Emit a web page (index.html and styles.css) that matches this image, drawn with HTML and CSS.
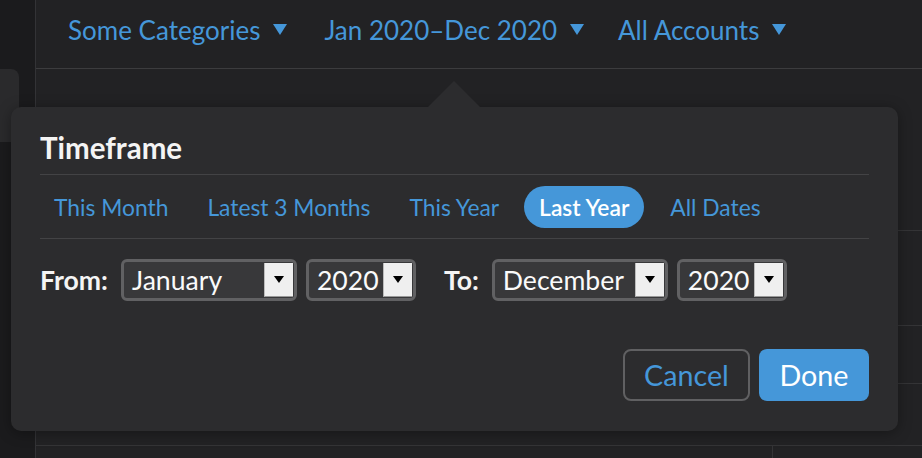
FILE: index.html
```html
<!DOCTYPE html>
<html>
<head>
<meta charset="utf-8">
<link rel="stylesheet" href="styles.css">
</head>
<body>
<div class="app">
  <aside class="sidebar">
    <div class="side-card"></div>
  </aside>
  <main class="main">
    <header class="header">
      <button class="filter">Some Categories <span class="caret"></span></button>
      <button class="filter">Jan 2020–Dec 2020 <span class="caret"></span></button>
      <button class="filter">All Accounts <span class="caret"></span></button>
    </header>
    <div class="grid">
      <div class="cell r1"></div><div class="cell r1"></div>
      <div class="cell r2"></div><div class="cell r2"></div>
      <div class="cell r3"></div><div class="cell r3"></div>
      <div class="cell r4"></div><div class="cell r4"></div>
      <div class="cell r5 c1"></div><div class="cell r5"></div>
    </div>
  </main>
</div>

<div class="popover">
  <div class="arrow"></div>
  <h2 class="title">Timeframe</h2>
  <nav class="presets">
    <a class="preset">This Month</a>
    <a class="preset">Latest 3 Months</a>
    <a class="preset">This Year</a>
    <a class="preset active">Last Year</a>
    <a class="preset">All Dates</a>
  </nav>
  <div class="range">
    <span class="label">From:</span>
    <div class="select month"><span class="val">January</span><span class="btn"><span class="tri"></span></span></div>
    <div class="select year"><span class="val">2020</span><span class="btn"><span class="tri"></span></span></div>
    <span class="label to">To:</span>
    <div class="select month"><span class="val">December</span><span class="btn"><span class="tri"></span></span></div>
    <div class="select year"><span class="val">2020</span><span class="btn"><span class="tri"></span></span></div>
  </div>
  <div class="actions">
    <button class="cancel">Cancel</button>
    <button class="done">Done</button>
  </div>
</div>
</body>
</html>
```

FILE: styles.css
```css
* { box-sizing: border-box; }
html, body {
  margin: 0;
  width: 922px;
  height: 458px;
  overflow: hidden;
  background: #1b1b1d;
  font-family: Lato, "Open Sans", sans-serif;
}
.app {
  display: flex;
  height: 458px;
}
.sidebar {
  width: 36px;
  flex: none;
  background: #1b1b1d;
  border-right: 1px solid #333336;
  padding-top: 69px;
}
.side-card {
  width: 19px;
  height: 73px;
  background: #2a2a2c;
  border-top-right-radius: 8px;
}
.main {
  flex: 1;
  display: flex;
  flex-direction: column;
  background: #222224;
}
.header {
  height: 69px;
  border-bottom: 1px solid #3c3c3e;
  display: flex;
  align-items: center;
  padding-left: 32px;
  padding-bottom: 9px;
  gap: 37px;
}
.filter {
  background: none;
  border: 0;
  padding: 0;
  font-family: Lato, sans-serif;
  font-size: 26px;
  color: #4597d9;
  display: flex;
  align-items: center;
  gap: 13px;
}
.filter:last-child { margin-left: -3px; }
.caret {
  width: 0;
  height: 0;
  border-left: 7px solid transparent;
  border-right: 7px solid transparent;
  border-top: 11px solid #4597d9;
}
.grid {
  flex: 1;
  display: grid;
  grid-template-columns: 737px 1fr;
  grid-template-rows: 162px 95px 58px 62px 1fr;
}
.cell { border-bottom: 1px solid #343436; }
.cell.r5 { border-bottom: 0; }
.cell.c1 { border-right: 1px solid #343436; }

.popover {
  position: absolute;
  left: 11px;
  top: 107px;
  width: 887px;
  height: 324px;
  background: #2c2c2e;
  border-radius: 10px;
  padding: 26px 29px 0 29px;
  box-shadow: 0 2px 14px rgba(0,0,0,0.35);
}
.arrow {
  position: absolute;
  left: 417px;
  top: -26px;
  width: 0;
  height: 0;
  border-left: 26px solid transparent;
  border-right: 26px solid transparent;
  border-bottom: 26px solid #2c2c2e;
}
.title {
  margin: 0;
  font-size: 29.5px;
  font-weight: 700;
  color: #f4f4f4;
  line-height: 30px;
  padding-bottom: 11px;
  border-bottom: 1px solid #434345;
}
.presets {
  display: flex;
  align-items: center;
  height: 64px;
  border-bottom: 1px solid #434345;
  gap: 11px;
}
.preset {
  font-size: 22.8px;
  color: #4597d9;
  padding: 0 14px;
  height: 42px;
  line-height: 42px;
  border-radius: 21px;
  white-space: nowrap;
}
.preset.active {
  background: #4597d9;
  color: #fff;
  font-weight: 600;
  padding: 0 15px;
}
.preset.active + .preset { margin-left: 1px; }
.range {
  display: flex;
  align-items: center;
  margin-top: 20px;
  height: 42px;
}
.label {
  font-size: 26.6px;
  font-weight: 700;
  color: #f4f4f4;
  margin-right: 13px;
}
.label.to { margin-left: 19px; }
.select {
  height: 42px;
  border: 3px solid #616163;
  border-radius: 6px;
  background: #38383a;
  display: flex;
  align-items: stretch;
  margin-right: 9px;
}
.select.month { width: 176px; }
.select.year { width: 110px; }
.val {
  flex: 1;
  font-size: 26.6px;
  color: #fafafa;
  padding-left: 8px;
  line-height: 36px;
  white-space: nowrap;
}
.btn {
  width: 29px;
  flex: none;
  background: #efefef;
  border-left: 1px solid #bbb;
  border-bottom: 1px solid #999;
  display: flex;
  align-items: center;
  justify-content: center;
  margin: 1px 1px 1px 0;
}
.tri {
  width: 0;
  height: 0;
  border-left: 5px solid transparent;
  border-right: 5px solid transparent;
  border-top: 7px solid #000;
}
.actions {
  display: flex;
  justify-content: flex-end;
  gap: 9px;
  margin-top: 48px;
}
.actions button {
  height: 52px;
  border-radius: 8px;
  font-family: Lato, sans-serif;
  font-size: 28.7px;
  padding: 0;
}
.cancel {
  width: 127px;
  background: none;
  border: 2px solid #606062;
  color: #4597d9;
}
.done {
  width: 110px;
  background: #4597d9;
  border: 0;
  color: #fff;
}
```
